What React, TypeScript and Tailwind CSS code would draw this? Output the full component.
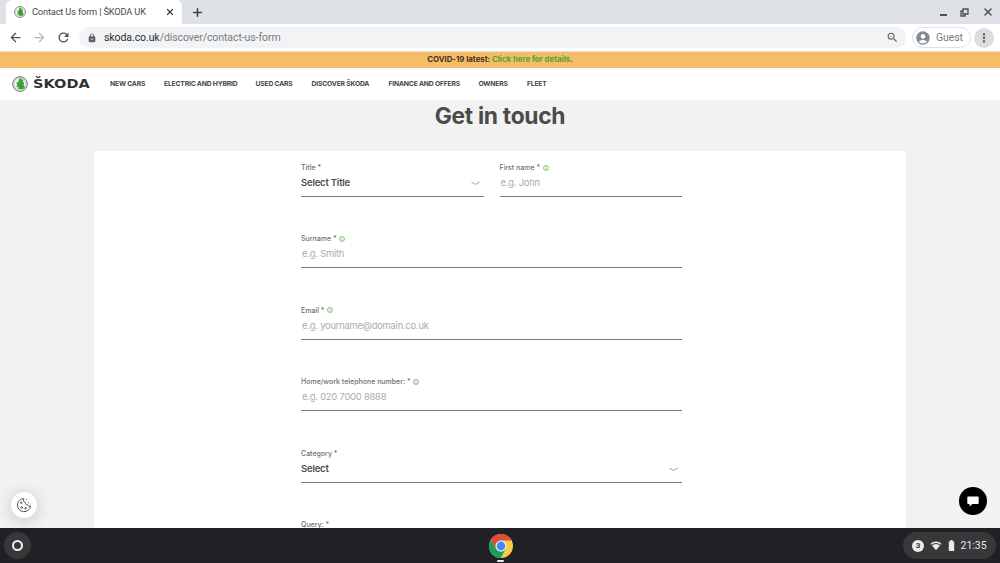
import { Plus, X } from 'lucide-react';
import { MdAccountCircle, MdArrowBack, MdArrowForward, MdBatteryFull, MdLock, MdMoreVert, MdRefresh, MdZoomOut } from 'react-icons/md';

const navItems = [
  { label: 'NEW CARS', width: 'w-[54px]' },
  { label: 'ELECTRIC AND HYBRID', width: 'w-[91.5px]' },
  { label: 'USED CARS', width: 'w-[56px]' },
  { label: 'DISCOVER ŠKODA', width: 'w-[77px]' },
  { label: 'FINANCE AND OFFERS', width: 'w-[90px]' },
  { label: 'OWNERS', width: 'w-[48.5px]' },
  { label: 'FLEET', width: 'w-[30px]' },
];

const SkodaBadge = ({ size }: { size: number }) => (
  <svg width={size} height={size} viewBox="0 0 32 32" className="shrink-0">
    <circle cx="16" cy="16" r="14.8" fill="#d9dcdb" stroke="#7b8280" strokeWidth="2" />
    <circle cx="16" cy="16" r="12" fill="#fff" stroke="#a3a8a6" strokeWidth="1" />
    <path d="M5 19l6-2-4-5 5 1 2-7 4-2 1 3 4 0-1 5 3 1-2 4 3 5-3 4H12l1-4-5 1 3-4z" fill="#45a338" />
    <path d="M13 14l4 3 1 9" fill="none" stroke="#2c7a2b" strokeWidth="1.3" />
  </svg>
);

const InfoIcon = () => (
  <svg width="6" height="6" viewBox="0 0 12 12" fill="none" stroke="#5cb544" strokeWidth="1.5">
    <circle cx="6" cy="6" r="5" />
    <path d="M6 2.8v1.4M6 5v4.4" />
  </svg>
);

const Chevron = () => (
  <svg width="9" height="5" viewBox="0 0 9 5" fill="none" stroke="#63b84c" strokeWidth="0.9">
    <path d="M.5 1l3.2 2q.8.5 1.6 0l3.2-2" />
  </svg>
);

interface FieldProps {
  label: string;
  value?: string;
  placeholder?: string;
  info?: boolean;
}

const Field = ({ label, value, placeholder, info }: FieldProps) => (
  <div className="h-[71.4px] min-w-0 shrink-0">
    <div className="flex h-[13px] items-center gap-[2.5px] text-[7px] leading-[13px] font-medium text-[#6f7071]">
      <span>{label}</span>
      {info && <InfoIcon />}
    </div>
    <div className="flex h-[23px] items-start justify-between border-b border-[#77787a] pt-[2px] pr-1">
      {value ? (
        <span className="text-[9.5px] leading-[14px] font-semibold tracking-[-0.2px] text-[#4b4c4d]">{value}</span>
      ) : (
        <span className="pl-px text-[9.4px] leading-[14px] tracking-[-0.22px] text-[#a9abac]">{placeholder}</span>
      )}
      {value && <div className="mt-[5px] flex"><Chevron /></div>}
    </div>
  </div>
);

const Browser = () => (
  <header className="shrink-0 font-[Roboto,sans-serif]">
    <div className="flex h-6 items-center justify-between bg-[#dee1e6] pl-[6px]">
      <div className="flex h-full items-center">
        <div className="flex h-full w-[176px] items-center rounded-t-[6px] bg-white pr-[7px] pl-2">
          <SkodaBadge size={12} />
          <span className="ml-[6px] flex-1 text-[9.3px] tracking-[-0.18px] whitespace-nowrap text-[#45494d]">Contact Us form | ŠKODA UK</span>
          <X size={10} className="text-[#3c4043]" strokeWidth={3} />
        </div>
        <Plus size={13} className="ml-[9px] text-[#3c4043]" strokeWidth={2.8} />
      </div>
      <div className="flex items-center gap-[13px] pr-[6px] text-[#4d5156]">
        <div className="mt-[6px] h-[1.5px] w-[7px] bg-[#4d5156]" />
        <svg width="9" height="9" viewBox="0 0 9 9" fill="none" stroke="currentColor" strokeWidth="1.3">
          <path d="M3 1h5v5H3z M5 6v2H1V3h2" />
        </svg>
        <X size={12} strokeWidth={3} />
      </div>
    </div>
    <div className="flex h-[28px] items-center border-b border-[#dfe0e2] bg-white px-[6px]">
      <div className="flex w-[73px] items-center gap-[9px] pl-[2px] text-[#4d5156]">
        <MdArrowBack size={15} />
        <MdArrowForward size={15} className="text-[#b4b6b8]" />
        <MdRefresh size={15} />
      </div>
      <div className="flex h-[21px] flex-1 items-center rounded-full bg-[#f1f3f4] pr-[7px] pl-2">
        <MdLock size={10} className="text-[#5f6368]" />
        <p className="ml-[7px] flex-1 text-[10.5px] tracking-[-0.08px] text-[#787b7f]">
          <span className="text-[#2b2d30]">skoda.co.uk</span>/discover/contact-us-form
        </p>
        <MdZoomOut size={13} className="text-[#5f6368]" />
      </div>
      <div className="mr-[3px] ml-[6px] flex h-[21px] w-[59px] items-center rounded-full border border-[#dfe1e4] pl-[2px]">
        <MdAccountCircle size={16} className="text-[#858a91]" />
        <span className="ml-[5px] text-[10.5px] tracking-[-0.1px] text-[#777b81]">Guest</span>
      </div>
      <div className="flex size-[20px] items-center justify-center rounded-full bg-[#dcdddf]">
        <MdMoreVert size={14} className="text-[#55585c]" />
      </div>
    </div>
  </header>
);

const CookieButton = () => (
  <button className="absolute bottom-[10px] left-[11px] flex size-[26px] items-center justify-center rounded-full bg-white shadow-[0_2px_16px_rgba(0,0,0,0.2)]">
    <svg width="16" height="16" viewBox="0 0 16 16" fill="none" stroke="#555" strokeWidth="1" strokeLinejoin="round">
      <path d="M7.8 1.5A6.6 6.6 0 1 0 14.6 9c-1.5.6-2.5 0-2.8-1.2-1.7.2-2.6-.7-2.2-2.3C7.8 5.1 7 3.4 7.8 1.5z" />
      <circle cx="5.3" cy="5.8" r=".8" />
      <circle cx="5.6" cy="10.5" r=".9" />
      <circle cx="9.6" cy="11.2" r=".8" />
      <path d="M10.2 2.5h.8M12 5.7h.9M14 6.8h.5" />
    </svg>
  </button>
);

const ChatButton = () => (
  <button className="absolute right-[13px] bottom-[13px] flex size-7 items-center justify-center rounded-full bg-black">
    <svg width="12" height="12" viewBox="0 0 12 12" fill="#fff">
      <path d="M1 1.5h10a.7.7 0 0 1 .7.7v6.1a.7.7 0 0 1-.7.7H5.3L2.6 11.5V9H1a.7.7 0 0 1-.7-.7V2.2A.7.7 0 0 1 1 1.5z" />
    </svg>
  </button>
);

const ChromeIcon = () => (
  <svg width="24" height="24" viewBox="0 0 48 48">
    <circle cx="24" cy="24" r="24" fill="#fbcb43" />
    <path d="M24 13H45.3A24 24 0 0 0 3.2 12L14.5 29.5z" fill="#dc4c3f" />
    <path d="M3.2 12A24 24 0 0 0 23.5 48L33.5 29.5 24 35 14.5 29.5z" fill="#1a9f5b" />
    <circle cx="24" cy="24" r="11" fill="#f4f4f4" />
    <circle cx="24" cy="24" r="8.8" fill="#4688f4" />
  </svg>
);

const WifiIcon = () => (
  <svg width="12" height="10" viewBox="0 0 12 10" className="ml-[6px]">
    <path d="M.9 3.2a7.6 7.6 0 0 1 10.2 0" fill="none" stroke="#ececed" strokeWidth="1.3" />
    <path d="M2 4.5a5.9 5.9 0 0 1 8 0L6 9.3z" fill="#ececed" />
  </svg>
);

const Shelf = () => (
  <footer className="grid h-[35px] shrink-0 grid-cols-3 items-center bg-[#202124] px-1 font-[Roboto,sans-serif]">
    <div className="flex size-[27px] items-center justify-center rounded-full bg-[#37383a]">
      <div className="size-[11px] rounded-full border-2 border-[#f1f1f1]" />
    </div>
    <div className="flex h-full flex-col items-center justify-end gap-[2px] pb-px pl-[2px]">
      <ChromeIcon />
      <div className="h-[2px] w-[7px] rounded-full bg-[#e8eaed]" />
    </div>
    <div className="flex h-[27px] w-[93px] items-center justify-self-end rounded-full bg-[#37383a] pl-[9px] text-[#ececed]">
      <div className="flex size-3 items-center justify-center rounded-full bg-[#ececed] text-[8px] font-bold text-[#37383a]">3</div>
      <WifiIcon />
      <MdBatteryFull size={13} className="ml-[3px]" />
      <span className="ml-[2.5px] text-[10.5px]">21:35</span>
    </div>
  </footer>
);

export default function App() {
  return (
    <div className="flex h-[563px] w-[1000px] flex-col overflow-hidden bg-white font-[Inter,sans-serif]">
      <Browser />
      <div className="h-[15.5px] shrink-0 bg-[#f6bd66] text-center text-[7.8px] leading-[15px] font-bold text-[#3b3524]">
        COVID-19 latest: <a className="text-[#4ba82e]">Click here for details</a>.
      </div>
      <nav className="flex h-[32.5px] shrink-0 items-center bg-white pl-3">
        <div className="flex w-[98px] items-center gap-[5px]">
          <SkodaBadge size={16} />
          <span className="origin-left scale-x-[1.21] font-['DejaVu_Sans',sans-serif] text-[12px] leading-none font-bold text-[#303132]">ŠKODA</span>
        </div>
        {navItems.map((item) => (
          <a key={item.label} className={`${item.width} text-[6.8px] font-bold tracking-[-0.2px] whitespace-nowrap text-[#454647]`}>
            {item.label}
          </a>
        ))}
      </nav>
      <main className="relative flex min-h-0 flex-1 flex-col overflow-hidden bg-[#f2f2f2]">
        <h1 className="h-[51px] shrink-0 pt-[2px] text-center text-[22.8px] leading-[28px] font-bold tracking-[-0.3px] text-[#4a4b4b]">Get in touch</h1>
        <section className="mx-auto flex min-h-0 w-[812px] flex-1 flex-col bg-white pt-[10px] pr-[224px] pl-[207px]">
          <div className="grid shrink-0 grid-cols-2 gap-4">
            <Field label="Title *" value="Select Title" />
            <Field label="First name *" placeholder="e.g. John" info />
          </div>
          <Field label="Surname *" placeholder="e.g. Smith" info />
          <Field label="Email *" placeholder="e.g. yourname@domain.co.uk" info />
          <Field label="Home/work telephone number: *" placeholder="e.g. 020 7000 8888" info />
          <Field label="Category *" value="Select" />
          <Field label="Query: *" />
        </section>
        <CookieButton />
        <ChatButton />
      </main>
      <Shelf />
    </div>
  );
}
